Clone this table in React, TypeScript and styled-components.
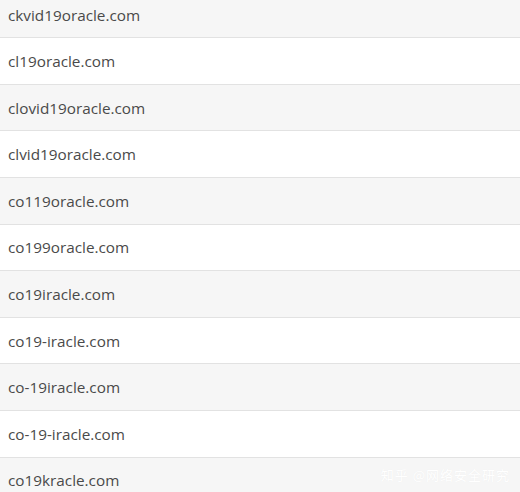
import styled, { createGlobalStyle } from "styled-components";

const GlobalStyle = createGlobalStyle`
  html, body {
    margin: 0;
    padding: 0;
    background: #ffffff;
    overflow: hidden;
  }
`;

const Page = styled.div`
  position: relative;
  width: 520px;
  height: 492px;
  overflow: hidden;
  font-family: "Open Sans", "Noto Sans", sans-serif;
`;

const List = styled.ul`
  list-style: none;
  margin: -8.3px 0 0 0;
  padding: 0;
`;

const Row = styled.li<{ $odd: boolean }>`
  box-sizing: border-box;
  height: 46.6px;
  display: flex;
  align-items: center;
  padding: 0 8px;
  font-size: 15.3px;
  color: #4a4a4a;
  background-color: ${(p) => (p.$odd ? "#f6f6f6" : "#ffffff")};
  border-bottom: 1px solid #e2e2e2;
`;

// 水印
const Watermark = styled.div`
  position: absolute;
  right: 10px;
  bottom: 8px;
  font-family: "Noto Sans CJK SC", sans-serif;
  font-size: 13px;
  color: #ffffff;
  text-shadow: 0 0 1px rgba(0, 0, 0, 0.05);
  letter-spacing: 1px;
`;

const domains = [
  "ckvid19oracle.com",
  "cl19oracle.com",
  "clovid19oracle.com",
  "clvid19oracle.com",
  "co119oracle.com",
  "co199oracle.com",
  "co19iracle.com",
  "co19-iracle.com",
  "co-19iracle.com",
  "co-19-iracle.com",
  "co19kracle.com",
];

function App() {
  return (
    <Page>
      <GlobalStyle />
      <List>
        {domains.map((d, i) => (
          <Row key={d} $odd={i % 2 === 0}>
            {d}
          </Row>
        ))}
      </List>
      <Watermark>知乎 @网络安全研究</Watermark>
    </Page>
  );
}

export default App;
